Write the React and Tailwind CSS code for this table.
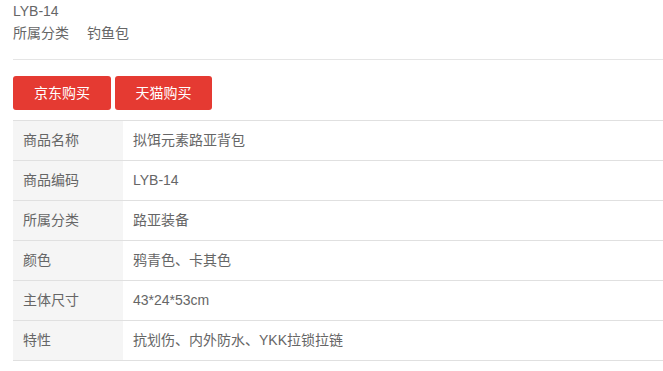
import React from 'react';

const specs = [
  ['商品名称', '拟饵元素路亚背包'],
  ['商品编码', 'LYB-14'],
  ['所属分类', '路亚装备'],
  ['颜色', '鸦青色、卡其色'],
  ['主体尺寸', '43*24*53cm'],
  ['特性', '抗划伤、内外防水、YKK拉锁拉链'],
];

export default function App() {
  return (
    <div
      className="w-[663px] h-[371px] overflow-hidden bg-white pl-[13px] text-[14px] text-[#666]"
      style={{ fontFamily: '"Liberation Sans", "Noto Sans CJK SC", sans-serif' }}
    >
      {/* product summary */}
      <div className="leading-[22px]">LYB-14</div>
      <div className="flex leading-[22px]">
        <span className="w-[74px]">所属分类</span>
        <span>钓鱼包</span>
      </div>

      <div className="mt-[15px] border-t border-[#e5e5e5]" />

      {/* buy buttons */}
      <div className="mt-[16px] flex gap-[4px]">
        <button className="h-[34px] w-[98px] rounded-[3px] bg-[#e53a32] text-white text-[14px]">
          京东购买
        </button>
        <button className="h-[34px] w-[97px] rounded-[3px] bg-[#e53a32] text-white text-[14px]">
          天猫购买
        </button>
      </div>

      {/* spec table */}
      <div className="mt-[10px] border-t border-[#e0e0e0]">
        {specs.map(([k, v]) => (
          <div key={k} className="flex h-[40px] border-b border-[#e0e0e0]">
            <div className="w-[110px] bg-[#f5f5f5] pl-[10px] flex items-center">{k}</div>
            <div className="flex-1 pl-[10px] flex items-center whitespace-nowrap">{v}</div>
          </div>
        ))}
      </div>
    </div>
  );
}
